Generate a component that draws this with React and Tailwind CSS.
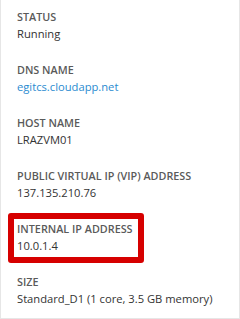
import React from "react";

const rows = [
  { label: "STATUS", value: "Running" },
  { label: "DNS NAME", value: "egitcs.cloudapp.net", link: true },
  { label: "HOST NAME", value: "LRAZVM01" },
  { label: "PUBLIC VIRTUAL IP (VIP) ADDRESS", value: "137.135.210.76" },
  { label: "INTERNAL IP ADDRESS", value: "10.0.1.4", highlight: true },
  { label: "SIZE", value: "Standard_D1 (1 core, 3.5 GB memory)" },
];

const Row = ({ label, value, link, highlight }) => (
  <div className="relative h-[53px]">
    {/* red annotation box */}
    {highlight && (
      <span className="absolute left-[-9px] top-[-7px] w-[136px] h-[50px] border-[6px] border-[#d60000] rounded-[3px]" />
    )}
    <div className="text-[10.8px] leading-[17px] font-semibold text-[#5a5a5a]">
      {label}
    </div>
    <div
      className={
        "text-[11.2px] leading-[18px] " +
        (link ? "text-[#2a8bd0]" : "text-[#333333]")
      }
    >
      {value}
    </div>
  </div>
);

export default function App() {
  return (
    <div
      className="w-[240px] h-[319px] bg-white border-x border-b border-[#e6e6e6] overflow-hidden"
      style={{ fontFamily: '"Open Sans", "Noto Sans", sans-serif' }}
    >
      <div className="pl-[16px] pt-[8px]">
        {rows.map((r) => (
          <Row key={r.label} {...r} />
        ))}
      </div>
    </div>
  );
}
